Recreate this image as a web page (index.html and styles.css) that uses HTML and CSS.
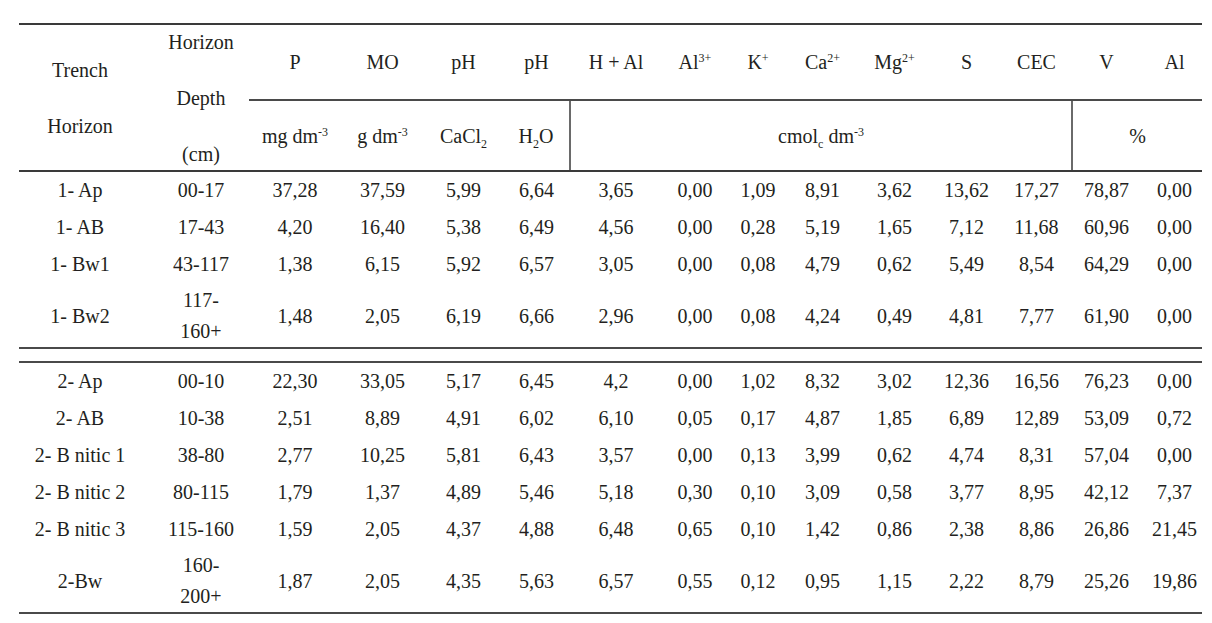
FILE: index.html
```html
<!DOCTYPE html>
<html>
<head>
<meta charset="utf-8">
<link rel="stylesheet" href="styles.css">
</head>
<body>
<table class="soil">
  <colgroup>
    <col class="c1"><col class="c2"><col class="c3"><col class="c4"><col class="c5"><col class="c6"><col class="c7"><col class="c8"><col class="c9"><col class="c10"><col class="c11"><col class="c12"><col class="c13"><col class="c14"><col class="c15">
  </colgroup>
  <thead>
    <tr class="h1">
      <th rowspan="2" class="tall first"><div class="stack">Trench<br>Horizon</div></th>
      <th rowspan="2" class="tall"><div class="stack three">Horizon<br>Depth<br>(cm)</div></th>
      <th>P</th><th>MO</th><th>pH</th><th>pH</th><th>H + Al</th>
      <th>Al<sup>3+</sup></th><th>K<sup>+</sup></th><th>Ca<sup>2+</sup></th><th>Mg<sup>2+</sup></th>
      <th>S</th><th>CEC</th><th>V</th><th class="last-col">Al</th>
    </tr>
    <tr class="h2">
      <th>mg dm<sup>-3</sup></th><th>g dm<sup>-3</sup></th><th>CaCl<sub>2</sub></th><th class="vr">H<sub>2</sub>O</th>
      <th colspan="7" class="vr">cmol<sub>c</sub> dm<sup>-3</sup></th>
      <th colspan="2">%</th>
    </tr>
  </thead>
  <tbody>
    <tr><td class="first">1- Ap</td><td>00-17</td><td>37,28</td><td>37,59</td><td>5,99</td><td>6,64</td><td>3,65</td><td>0,00</td><td>1,09</td><td>8,91</td><td>3,62</td><td>13,62</td><td>17,27</td><td>78,87</td><td class="last-col">0,00</td></tr>
    <tr><td class="first">1- AB</td><td>17-43</td><td>4,20</td><td>16,40</td><td>5,38</td><td>6,49</td><td>4,56</td><td>0,00</td><td>0,28</td><td>5,19</td><td>1,65</td><td>7,12</td><td>11,68</td><td>60,96</td><td class="last-col">0,00</td></tr>
    <tr><td class="first">1- Bw1</td><td>43-117</td><td>1,38</td><td>6,15</td><td>5,92</td><td>6,57</td><td>3,05</td><td>0,00</td><td>0,08</td><td>4,79</td><td>0,62</td><td>5,49</td><td>8,54</td><td>64,29</td><td class="last-col">0,00</td></tr>
    <tr class="two a"><td class="first">1- Bw2</td><td>117-<br>160+</td><td>1,48</td><td>2,05</td><td>6,19</td><td>6,66</td><td>2,96</td><td>0,00</td><td>0,08</td><td>4,24</td><td>0,49</td><td>4,81</td><td>7,77</td><td>61,90</td><td class="last-col">0,00</td></tr>
    <tr class="sep"><td colspan="15"></td></tr>
    <tr><td class="first">2- Ap</td><td>00-10</td><td>22,30</td><td>33,05</td><td>5,17</td><td>6,45</td><td>4,2</td><td>0,00</td><td>1,02</td><td>8,32</td><td>3,02</td><td>12,36</td><td>16,56</td><td>76,23</td><td class="last-col">0,00</td></tr>
    <tr><td class="first">2- AB</td><td>10-38</td><td>2,51</td><td>8,89</td><td>4,91</td><td>6,02</td><td>6,10</td><td>0,05</td><td>0,17</td><td>4,87</td><td>1,85</td><td>6,89</td><td>12,89</td><td>53,09</td><td class="last-col">0,72</td></tr>
    <tr><td class="first">2- B nitic 1</td><td>38-80</td><td>2,77</td><td>10,25</td><td>5,81</td><td>6,43</td><td>3,57</td><td>0,00</td><td>0,13</td><td>3,99</td><td>0,62</td><td>4,74</td><td>8,31</td><td>57,04</td><td class="last-col">0,00</td></tr>
    <tr><td class="first">2- B nitic 2</td><td>80-115</td><td>1,79</td><td>1,37</td><td>4,89</td><td>5,46</td><td>5,18</td><td>0,30</td><td>0,10</td><td>3,09</td><td>0,58</td><td>3,77</td><td>8,95</td><td>42,12</td><td class="last-col">7,37</td></tr>
    <tr><td class="first">2- B nitic 3</td><td>115-160</td><td>1,59</td><td>2,05</td><td>4,37</td><td>4,88</td><td>6,48</td><td>0,65</td><td>0,10</td><td>1,42</td><td>0,86</td><td>2,38</td><td>8,86</td><td>26,86</td><td class="last-col">21,45</td></tr>
    <tr class="two b last"><td class="first">2-Bw</td><td>160-<br>200+</td><td>1,87</td><td>2,05</td><td>4,35</td><td>5,63</td><td>6,57</td><td>0,55</td><td>0,12</td><td>0,95</td><td>1,15</td><td>2,22</td><td>8,79</td><td>25,26</td><td class="last-col">19,86</td></tr>
  </tbody>
</table>
</body>
</html>
```
FILE: styles.css
```css
html, body {
  margin: 0;
  padding: 0;
  background: #fff;
}

body {
  padding: 23px 0 0 19px;
  font-family: "Liberation Serif", "Times New Roman", serif;
  font-size: 20px;
  color: #231f20;
}

.soil {
  width: 1183px;
  table-layout: fixed;
  border-collapse: collapse;
  border-top: 2px solid #3a3a3a;
  border-bottom: 2px solid #4a4a4a;
}

.c1 { width: 134px; }
.c2 { width: 96px; }
.c3 { width: 92px; }
.c4 { width: 83px; }
.c5 { width: 79px; }
.c6 { width: 67px; }
.c7 { width: 92px; }
.c8 { width: 66px; }
.c9 { width: 60px; }
.c10 { width: 69px; }
.c11 { width: 75px; }
.c12 { width: 69px; }
.c13 { width: 71px; }
.c14 { width: 69px; }
.c15 { width: 61px; }

th, td {
  padding: 0;
  text-align: center;
  vertical-align: middle;
  font-weight: normal;
  white-space: nowrap;
  line-height: 22px;
}

.first {
  padding-right: 12px;
}

.last-col {
  padding-left: 6px;
}

.stack {
  line-height: 56px;
}

.stack.three {
  margin: -12px 0;
}

.h1 { height: 76px; }
.h1 th { border-bottom: 2px solid #4a4a4a; }
.h1 th.tall { border-bottom: 2px solid #3a3a3a; }

.h2 { height: 71px; }
.h2 th { border-bottom: 2px solid #3a3a3a; }
.h2 th.vr { border-right: 2px solid #6a6a6a; }

tbody tr { height: 37px; }
tbody tr.two { height: 66px; }
tbody tr.two td { line-height: 31px; padding-top: 3px; }

tr.sep { height: 14px; }
tr.sep td {
  border-top: 2px solid #4a4a4a;
  border-bottom: 2px solid #4a4a4a;
  padding: 0;
  line-height: 0;
}

sup, sub {
  font-size: 12px;
  line-height: 0;
}

sup { vertical-align: 7px; }
sub { vertical-align: -5px; }
```
